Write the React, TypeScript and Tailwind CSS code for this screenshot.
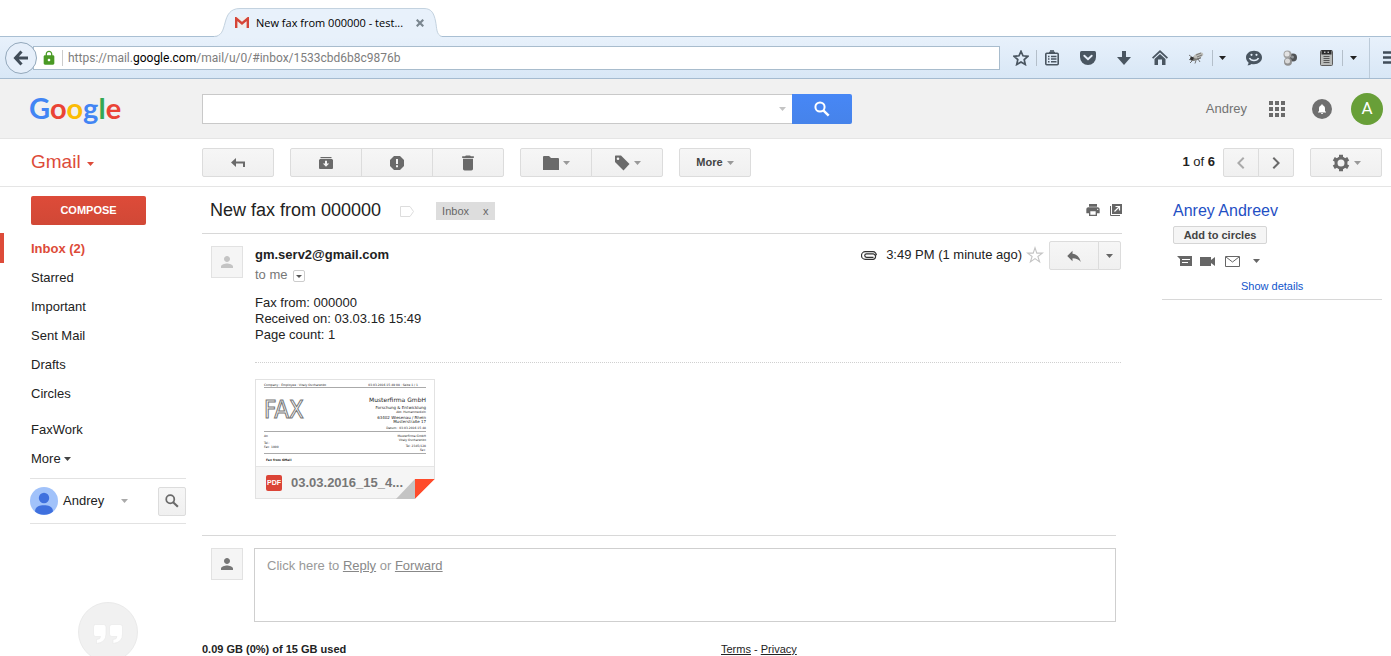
import { ReactNode } from "react";
import {
    MdDelete,
    MdKeyboardArrowLeft,
    MdKeyboardArrowRight,
    MdLock,
    MdNotifications,
    MdPerson,
    MdPrint,
    MdReply,
} from "react-icons/md";

const folders = ["Starred", "Important", "Sent Mail", "Drafts", "Circles"];

function Caret({ className = "text-[#999]" }: { className?: string }) {
    return (
        <svg viewBox="0 0 7 4" className={`w-[7px] h-1 shrink-0 ${className}`} fill="currentColor" aria-hidden="true">
            <path d="M0 0h7L3.500 4z" />
        </svg>
    )
}

function SearchIcon({ className }: { className: string }) {
    return (
        <svg viewBox="0 0 16 16" className={`shrink-0 ${className}`} fill="none" stroke="currentColor" aria-hidden="true">
            <circle cx="6" cy="6" r="4.600" strokeWidth="2" />
            <path d="M9.300 9.300l5.400 5.400" strokeWidth="2.400" />
        </svg>
    )
}

function GearIcon() {
    return (
        <svg viewBox="-9 -9 18 18" className="w-[18px] h-[18px] shrink-0" aria-hidden="true">
            <circle r="5" fill="none" stroke="currentColor" strokeWidth="3" />
            <path
                d="M0-8.300V-5M7.200-4.150L4.300-2.500M7.200 4.150L4.300 2.500M0 8.300V5M-7.200 4.150L-4.300 2.500M-7.200-4.150L-4.300-2.500"
                fill="none"
                stroke="currentColor"
                strokeWidth="4"
            />
        </svg>
    )
}

function ToolButton({ label, className = "", children }: { label: string, className?: string, children: ReactNode }) {
    return (
        <button
            aria-label={label}
            className={`h-[29px] flex items-center justify-center gap-1 border border-[#dcdcdc] bg-linear-to-b from-[#f6f6f6] to-[#f0f0f0] text-[#6a6a6a] ${className}`}
        >
            {children}
        </button>
    )
}

function BrowserTab() {
    return (
        <div className="h-[37px] bg-white border-b border-[#a9bfd3] flex items-end pl-[214px]">
            <div className="relative w-[228px] h-[29px] -mb-px flex items-center">
                <svg viewBox="0 0 228 29" className="absolute inset-0 w-full h-full" aria-hidden="true">
                    <path d="M0 29C8 28 9 22 11 15C13 7 16 .5 26 .5H210C218 .5 220 6 221.500 13C223 20 222 27 228 29z" fill="#e8f1fb" />
                    <path d="M0 28.500C8 28 9 22 11 15C13 7 16 .5 26 .5H210C218 .5 220 6 221.500 13C223 20 222 27 228 28.500" fill="none" stroke="#c3d2df" />
                </svg>
                <div className="relative flex items-center pl-[21px] w-full">
                    <svg viewBox="0 0 14 11" className="w-3.5 h-[11px]" aria-hidden="true">
                        <path d="M1 0h12v11H1z" fill="#eee" />
                        <path d="M1.200 11V1.500L7 6.500l5.800-5V11" fill="none" stroke="#d54538" strokeWidth="2.400" />
                    </svg>
                    <span className="ml-[7px] text-[11px] leading-4 text-black whitespace-nowrap">New fax from 000000 - test...</span>
                    <button aria-label="Close tab" className="ml-auto mr-[18px]">
                        <svg viewBox="0 0 8 8" className="w-2 h-2" stroke="#7b8790" strokeWidth="2.200" aria-hidden="true">
                            <path d="M.7.7l6.600 6.600M7.300.7L.7 7.300" />
                        </svg>
                    </button>
                </div>
            </div>
        </div>
    )
}

function ChromeButton({ label, className = "w-9", children }: { label: string, className?: string, children: ReactNode }) {
    return (
        <button aria-label={label} className={`h-6 shrink-0 flex items-center justify-center text-[#4a5661] ${className}`}>
            {children}
        </button>
    )
}

function Divider() {
    return <span className="w-1 h-4 shrink-0 flex justify-center"><span className="w-px h-4 bg-[#b4bfca]" /></span>
}

function AddressBar() {
    return (
        <div className="h-[42px] flex items-center bg-linear-to-b from-[#e8f1fb] to-[#d8e7f6] border-b border-[#a5bbd0] pl-[5px]">
            <button aria-label="Back" className="relative w-8 h-8 shrink-0 rounded-full border border-[#93a8bb] bg-[#e6effa] flex items-center justify-center">
                <svg viewBox="0 0 16 16" className="w-4 h-4" fill="none" stroke="#414d59" strokeWidth="3" aria-hidden="true">
                    <path d="M8.500 1.500L2.500 8l6 6.500M3 8h12" />
                </svg>
            </button>
            <div className="flex-1 h-6 -ml-1 flex items-center border border-[#a8bccd] bg-white">
                <MdLock className="ml-[7px] w-4 h-4 text-[#4a9a24]" />
                <span className="w-px h-4 ml-[5px] bg-[#ccc]" />
                <span className="ml-[5px] font-['Roboto','Open_Sans',sans-serif] text-[12px] leading-4 text-[#7d7d7d] whitespace-nowrap">
                    https://mail.<span className="text-black">google.com</span>/mail/u/0/#inbox/1533cbd6b8c9876b
                </span>
            </div>
            <ChromeButton label="Bookmark" className="w-7 ml-[7px] -mr-px">
                <svg viewBox="0 0 16 16" className="w-4 h-4" fill="none" stroke="currentColor" strokeWidth="1.700" aria-hidden="true">
                    <path d="M8 1.300l2 4.500 4.900.5-3.700 3.300 1.100 4.900L8 12l-4.300 2.500 1.100-4.900L1.100 6.300 6 5.800z" />
                </svg>
            </ChromeButton>
            <Divider />
            <ChromeButton label="Bookmarks list" className="w-7 mr-1">
                <svg viewBox="0 0 16 16" className="w-4 h-4" fill="none" stroke="currentColor" strokeWidth="1.600" aria-hidden="true">
                    <rect x="1.800" y="3.300" width="12.400" height="11.400" rx="1" />
                    <path d="M4 6.500h1.500M7 6.500h5.500M4 9h1.500M7 9h5.500M4 11.700h1.500M7 11.700h5.500M5 2.500h6" />
                    <path d="M6 1h4" />
                </svg>
            </ChromeButton>
            <ChromeButton label="Pocket">
                <svg viewBox="0 0 16 14" className="w-4 h-3.5" aria-hidden="true">
                    <path d="M1.500 0h13Q16 0 16 1.500V6a8 8 0 0 1-16 0V1.500Q0 0 1.500 0z" fill="currentColor" />
                    <path d="M4.300 4.700L8 8.200l3.700-3.500" fill="none" stroke="#e6eef8" strokeWidth="1.900" strokeLinecap="round" />
                </svg>
            </ChromeButton>
            <ChromeButton label="Downloads">
                <svg viewBox="0 0 14 14" className="w-3.5 h-3.5" fill="currentColor" aria-hidden="true">
                    <path d="M5 0h4v6h5l-7 8-7-8h5z" />
                </svg>
            </ChromeButton>
            <ChromeButton label="Home">
                <svg viewBox="0 0 16 15" className="w-4 h-[15px]" fill="currentColor" aria-hidden="true">
                    <path d="M8 0l8 7.500-1.200 1.200L8 2.500 1.200 8.700 0 7.500z" />
                    <path d="M8 4l5.500 5v6H10V9.500H6V15H2.500V9z" />
                </svg>
            </ChromeButton>
            <ChromeButton label="Fly" className="w-8 pl-1">
                <svg viewBox="0 0 16 14" className="w-4 h-3.5" aria-hidden="true">
                    <path d="M2 12l3-3-4-.5M7 12.500l1-3M12 11l-2-3M1 4l4 3" fill="none" stroke="#666" strokeWidth=".9" />
                    <ellipse cx="8" cy="7" rx="5.500" ry="2.400" fill="#7d7d79" transform="rotate(-20 8 7)" />
                    <ellipse cx="10.500" cy="4.500" rx="5" ry="2.400" fill="#bdbdb8" transform="rotate(-22 10.500 4.500)" />
                    <path d="M9 6l5-2M9 8l4-1M8 4l5-2" stroke="#666" strokeWidth=".8" />
                    <circle cx="3.800" cy="7.500" r="1.800" fill="#333" />
                </svg>
            </ChromeButton>
            <Divider />
            <ChromeButton label="Fly options" className="w-4"><Caret className="text-[#222]" /></ChromeButton>
            <ChromeButton label="Chat" className="w-9 ml-1.5">
                <svg viewBox="0 0 16 16" className="w-4 h-4" aria-hidden="true">
                    <path d="M8 .8c4.500 0 8 2.900 8 6.700s-3.500 6.700-8 6.700c-.9 0-1.700-.1-2.500-.3-1 1-2.500 1.500-4.200 1.400.9-.8 1.300-1.700 1.200-2.800C1 11.300 0 9.500 0 7.500 0 3.700 3.500.8 8 .8z" fill="currentColor" />
                    <path d="M3.500 8c1.500 3.300 7.500 3.300 9 0" fill="none" stroke="#e3edf8" strokeWidth="1.500" />
                    <circle cx="5.500" cy="4.800" r="1.100" fill="#e3edf8" />
                    <circle cx="10.500" cy="4.800" r="1.100" fill="#e3edf8" />
                </svg>
            </ChromeButton>
            <ChromeButton label="Molecule">
                <svg viewBox="0 0 14 16" className="w-3.5 h-4" aria-hidden="true">
                    <circle cx="10" cy="7.500" r="4" fill="#505356" />
                    <circle cx="9.500" cy="7" r="1.500" fill="#92969a" />
                    <circle cx="4.500" cy="4.500" r="4" fill="#a3a3a3" />
                    <circle cx="4" cy="4" r="2.500" fill="#e3e3e3" />
                    <circle cx="5" cy="11.700" r="4" fill="#8f8f8f" />
                    <circle cx="4.500" cy="11" r="2.500" fill="#d9d9d9" />
                </svg>
            </ChromeButton>
            <ChromeButton label="Device" className="w-8 pl-1">
                <svg viewBox="0 0 13 16" className="w-[13px] h-4" aria-hidden="true">
                    <rect x=".5" y=".5" width="12" height="15" rx="1" fill="#b8bab8" stroke="#5c5c5c" />
                    <rect x="1.500" y="0" width="10" height="4.500" fill="#2d2d2d" />
                    <path d="M4 2.200h1.500M7.500 2.200H9" stroke="#fff" />
                    <path d="M3.500 6.500h6M3.500 8.500h6M3.500 10.500h6M3.500 12.500h6" stroke="#565656" />
                </svg>
            </ChromeButton>
            <Divider />
            <ChromeButton label="Device options" className="w-[18px]"><Caret className="text-[#222]" /></ChromeButton>
            <span className="w-px h-10 ml-[7px] bg-[#bccbd9]" />
            <button aria-label="Menu" className="w-[21px] pl-[13px] shrink-0 overflow-hidden">
                <svg viewBox="0 0 16 13" className="w-4 h-[13px] max-w-none" stroke="#414d59" strokeWidth="2.600" aria-hidden="true">
                    <path d="M0 1.500h16M0 6.500h16M0 11.500h16" />
                </svg>
            </button>
        </div>
    )
}

function GoogleBar() {
    return (
        <header className="h-[60px] flex items-center bg-[#f1f1f1] border-b border-[#e5e5e5] pr-2">
            <a href="#" aria-label="Google" className="w-[202px] pl-[29px] pb-0.5 shrink-0 font-['Lato',sans-serif] text-[29px] leading-10 font-bold">
                <span className="text-[#4285f4]">G</span>
                <span className="text-[#ea4335]">o</span>
                <span className="text-[#fbbc05]">o</span>
                <span className="text-[#4285f4]">g</span>
                <span className="text-[#34a853]">l</span>
                <span className="text-[#ea4335]">e</span>
            </a>
            <form className="flex flex-1 max-w-[650px] h-[30px]">
                <div className="flex-1 flex items-center bg-white border border-r-0 border-[#c9c9c9] pr-1.5">
                    <input aria-label="Search mail" className="flex-1 h-full px-2 outline-none" />
                    <Caret className="text-[#c4c4c4]" />
                </div>
                <button type="button" aria-label="Search" className="w-[60px] rounded-r-xs bg-linear-to-b from-[#4787f6] to-[#4683ea] text-white flex items-center justify-center">
                    <SearchIcon className="w-4 h-4" />
                </button>
            </form>
            <div className="ml-auto flex items-center">
                <a href="#" className="text-[#737373]">Andrey</a>
                <button aria-label="Apps" className="ml-[22px]">
                    <svg viewBox="0 0 16 16" className="w-4 h-4" fill="#6a6a6a" aria-hidden="true">
                        <path d="M0 0h4v4H0zM6 0h4v4H6zM12 0h4v4h-4zM0 6h4v4H0zM6 6h4v4H6zM12 6h4v4h-4zM0 12h4v4H0zM6 12h4v4H6zM12 12h4v4h-4z" />
                    </svg>
                </button>
                <button aria-label="Notifications" className="ml-[27px] w-5 h-5 rounded-full bg-[#6f6f6f] flex items-center justify-center">
                    <MdNotifications className="w-3 h-3 text-white" />
                </button>
                <button aria-label="Account" className="ml-[19px] w-8 h-8 rounded-full bg-[#689f38] text-white font-['Roboto',sans-serif] text-[17px]">A</button>
            </div>
        </header>
    )
}

function Toolbar() {
    return (
        <div className="h-12 flex items-center border-b border-[#e5e5e5] pr-[9px]">
            <button className="w-[202px] pl-[31px] shrink-0 flex items-center text-[19px] text-[#dd4b39]">
                Gmail<Caret className="ml-1.5 mt-0.5" />
            </button>
            <div className="flex gap-4">
                <ToolButton label="Back to inbox" className="w-[72px] rounded-xs">
                    <svg viewBox="0 0 14 10" className="w-3.5 h-2.5" aria-hidden="true">
                        <path d="M5 0v9L0 4.500z" fill="currentColor" />
                        <path d="M4 4.500h9V9" fill="none" stroke="currentColor" strokeWidth="2" />
                    </svg>
                </ToolButton>
                <div className="flex">
                    <ToolButton label="Archive" className="w-[72px] rounded-l-xs">
                        <svg viewBox="0 0 14 12" className="w-3.5 h-3" aria-hidden="true">
                            <path d="M1.500 0h11v1.200h-11z" fill="currentColor" />
                            <path d="M1 2h12l1 1v8q0 1-1 1H1q-1 0-1-1V3z" fill="currentColor" />
                            <path d="M6 3.800h2v2.700h2.200L7 9.800 3.800 6.500H6z" fill="#f3f3f3" />
                        </svg>
                    </ToolButton>
                    <ToolButton label="Report spam" className="w-[72px] -ml-px">
                        <svg viewBox="0 0 14 14" className="w-3.5 h-3.5" aria-hidden="true">
                            <path d="M4 0h6l4 4v6l-4 4H4l-4-4V4z" fill="currentColor" />
                            <path d="M6 3h2v5H6zM6 9.300h2v2H6z" fill="#f3f3f3" />
                        </svg>
                    </ToolButton>
                    <ToolButton label="Delete" className="w-[72px] -ml-px rounded-r-xs"><MdDelete className="w-5 h-5" /></ToolButton>
                </div>
                <div className="flex">
                    <ToolButton label="Move to" className="w-[72px] rounded-l-xs">
                        <svg viewBox="0 0 16 14" className="w-4 h-3.5" fill="currentColor" aria-hidden="true">
                            <path d="M1 0h5l2 2h7q1 0 1 1v11H0V1q0-1 1-1z" />
                        </svg>
                        <Caret />
                    </ToolButton>
                    <ToolButton label="Labels" className="w-[72px] -ml-px rounded-r-xs">
                        <svg viewBox="0 0 16 16" className="w-4 h-4" aria-hidden="true">
                            <path d="M1.500.5H7l8.500 8.500-6 6.500L1 7V1z" fill="currentColor" />
                            <circle cx="4" cy="3.700" r="1.300" fill="#f3f3f3" />
                        </svg>
                        <Caret />
                    </ToolButton>
                </div>
                <ToolButton label="More" className="w-[72px] rounded-xs text-[11px] font-bold">
                    <span className="text-[#444]">More</span><Caret />
                </ToolButton>
            </div>
            <span className="ml-auto mr-2 -mt-0.5"><b>1</b> of <b>6</b></span>
            <div className="flex">
                <ToolButton label="Newer" className="w-9 rounded-l-xs"><MdKeyboardArrowLeft className="w-6 h-6 text-[#aaa] shrink-0" /></ToolButton>
                <ToolButton label="Older" className="w-9 -ml-px rounded-r-xs"><MdKeyboardArrowRight className="w-6 h-6 shrink-0" /></ToolButton>
            </div>
            <ToolButton label="Settings" className="w-[72px] ml-4 rounded-xs"><GearIcon /><Caret /></ToolButton>
        </div>
    )
}

function Sidebar() {
    return (
        <nav className="w-[202px] shrink-0 pt-[9px]">
            <button className="ml-[31px] w-[115px] h-[29px] rounded-xs bg-linear-to-b from-[#dd4b39] to-[#d14836] text-white text-[11px] font-bold">COMPOSE</button>
            <ul className="mt-2 leading-[29px]">
                <li className="border-l-4 border-[#dd4b39] pl-[27px] pt-px">
                    <a href="#" className="font-bold text-[#dd4b39]">Inbox (2)</a>
                </li>
                {
                    folders.map((name) => (
                        <li key={name} className="pl-[31px]"><a href="#">{name}</a></li>
                    ))
                }
                <li className="pl-[31px] mt-[7px]"><a href="#">FaxWork</a></li>
                <li className="pl-[31px]">
                    <button className="flex items-center gap-[3px]">More <Caret className="text-[#444]" /></button>
                </li>
            </ul>
            <div className="ml-[30px] mr-4 mt-[5px] h-[46px] flex items-center border-y border-[#e2e2e2]">
                <svg viewBox="0 0 28 28" className="w-7 h-7" aria-hidden="true">
                    <circle cx="14" cy="14" r="14" fill="#a1c2fa" />
                    <circle cx="14" cy="11" r="5.200" fill="#3f70de" />
                    <path d="M5 24.500C5 20 9 18.300 14 18.300s9 1.700 9 6.200a14 14 0 0 1-18 0z" fill="#3f70de" />
                </svg>
                <span className="ml-[5px]">Andrey</span>
                <button aria-label="Chat status" className="ml-[17px]"><Caret className="text-[#aaa]" /></button>
                <ToolButton label="Search people" className="w-7 ml-auto rounded-xs"><SearchIcon className="w-3.5 h-3.5" /></ToolButton>
            </div>
            <div className="ml-[78px] mt-[78px] w-[60px] h-[60px] rounded-full bg-[#f1f1f1] border border-[#eaeaea] flex items-center justify-center pt-1">
                <svg viewBox="0 0 30 20" className="w-[30px] h-5" fill="#fff" stroke="#e8e8e8" strokeWidth=".6" aria-hidden="true">
                    <path d="M2.500.5h8q2.500 0 2.500 2.500v7q0 8.500-9.500 9.500v-4q4 0 4-3h-5Q.5 12.500.5 10V3Q.5.500 2.500.5z" />
                    <path d="M19 .5h8q2.500 0 2.500 2.500v7q0 8.500-9.500 9.500v-4q4 0 4-3h-5q-2.500 0-2.500-2.500V3Q16.500.500 19 .5z" />
                </svg>
            </div>
        </nav>
    )
}

function FaxPreview() {
    return (
        <div className="h-[86px] bg-white pt-[3px] px-2 font-['DejaVu_Sans',sans-serif] text-[3px] leading-1 text-[#222]">
            <div className="flex justify-between border-b border-[#aaa] pr-2">
                <span>Company · Employee · Vitaly Ovcharenko</span>
                <span>03.03.2016 15:49:08 · Seite 1 / 1</span>
            </div>
            <div className="flex justify-between pt-2 h-[44px] border-b border-[#aaa]">
                <p className="font-['DejaVu_Sans_Condensed','DejaVu_Sans',sans-serif] text-[24px] leading-7 text-white [-webkit-text-stroke:1px_#777]">FAX</p>
                <div className="text-right">
                    <p className="text-[6px] leading-2">Musterfirma GmbH</p>
                    <p className="text-[4px] leading-1 pt-0.5">Forschung &amp; Entwicklung</p>
                    <p className="leading-1">Abt. Humanmedizin</p>
                    <p className="text-[4px] leading-1 pt-0.5">63402 Wiesenau / Rhein</p>
                    <p className="text-[4px] leading-1">Musterstraße 17</p>
                    <p className="pt-0.5">Datum : 03.03.2016 15:48</p>
                </div>
            </div>
            <div className="flex justify-between h-[22px] pt-0.5 border-b border-[#aaa]">
                <div>
                    <p className="pb-[3px]">An</p>
                    <p>Tel.:</p>
                    <p>Fax: 1000</p>
                </div>
                <div className="text-right">
                    <p>Musterfirma GmbH</p>
                    <p>Vitaly Ovcharenko</p>
                    <p className="pt-0.5">Tel: 2345/128</p>
                    <p>Fax:</p>
                </div>
            </div>
            <p className="pl-0.5 pt-1 font-bold">Fax from GMail</p>
        </div>
    )
}

function Attachment() {
    return (
        <a href="#" className="relative block w-[180px] h-[120px] border border-[#e2e2e2]">
            <FaxPreview />
            <div className="h-8 flex items-center bg-[#f5f5f5] border-t border-[#e5e5e5] pl-2.5">
                <span className="w-4 h-4 rounded-xs bg-[#db4437] text-white text-[7px] leading-4 font-bold text-center">PDF</span>
                <span className="ml-[9px] text-[13px] font-bold text-[#777]">03.03.2016_15_4...</span>
            </div>
            <svg viewBox="0 0 39 20" className="absolute -right-px -bottom-px w-[39px] h-5" aria-hidden="true">
                <path d="M19 0v20H0z" fill="#c4c4c4" />
                <path d="M19 0h20L19 20z" fill="#ff4b2b" />
                <path d="M39 0v20H19z" fill="#fff" />
            </svg>
        </a>
    )
}

function Avatar({ className }: { className: string }) {
    return (
        <div className="w-8 h-8 shrink-0 border border-[#e2e2e2] bg-[#f5f5f5] flex items-center justify-center">
            <MdPerson className={`w-[18px] h-[18px] ${className}`} />
        </div>
    )
}

function Message() {
    return (
        <main className="flex-1 min-w-0">
            <div className="h-[47px] flex items-center border-b border-[#d8d8d8] pl-2">
                <h1 className="text-[18px]">New fax from 000000</h1>
                <svg viewBox="0 0 14 11" className="ml-[19px] mt-0.5 w-3.5 h-[11px]" fill="none" stroke="#ddd" aria-hidden="true">
                    <path d="M.5.5h9.500l3.500 5-3.500 5H.5z" />
                </svg>
                <div className="ml-[22px] mt-0.5 h-[18px] px-1.5 flex items-center gap-3.5 bg-[#ddd] text-[#666] text-[11px]">
                    <span>Inbox</span>
                    <button aria-label="Remove label">x</button>
                </div>
                <button aria-label="Print all" className="ml-auto"><MdPrint className="w-4 h-4 text-[#666]" /></button>
                <button aria-label="Open in new window" className="ml-[9px]">
                    <svg viewBox="0 0 12 12" className="w-3 h-3" aria-hidden="true">
                        <path d="M2 0h10v10H2z" fill="#666" />
                        <path d="M.5 2v9.500H10" fill="none" stroke="#666" />
                        <path d="M4.500 7.500L9 3M5.500 2.500h4v4" fill="none" stroke="#fff" strokeWidth="1.200" />
                    </svg>
                </button>
            </div>

            <article className="flex pl-[9px] pr-px pt-[7px]">
                <div className="pt-[5px]"><Avatar className="text-[#c4c4c4]" /></div>
                <div className="flex-1 ml-3">
                    <div className="flex">
                        <div className="pt-1.5">
                            <p className="font-bold leading-4">gm.serv2@gmail.com</p>
                            <p className="flex items-center mt-1 leading-4 text-[#777]">
                                to me
                                <button aria-label="Show details" className="ml-[5px] mt-0.5 w-3 h-3 border border-[#ccc] rounded-xs flex items-center justify-center">
                                    <svg viewBox="0 0 6 3" className="w-1.5 h-[3px]" aria-hidden="true"><path d="M0 0h6L3 3z" fill="#555" /></svg>
                                </button>
                            </p>
                        </div>
                        <div className="ml-auto h-[29px] flex items-center">
                            <svg viewBox="0 0 16 9" className="w-4 h-[9px]" fill="none" stroke="#333" strokeWidth="1.200" aria-label="Has attachment">
                                <path d="M12.500 6.300H5.500a1.700 1.700 0 0 1 0-3.500h6.800a2.800 2.800 0 0 1 0 5.500H4.300a3.800 3.800 0 0 1 0-7.600H12a3.500 3.500 0 0 1 3.400 3.600" />
                            </svg>
                            <span className="ml-[9px] pb-0.5">3:49 PM (1 minute ago)</span>
                            <button aria-label="Star" className="ml-1 pb-0.5">
                                <svg viewBox="0 0 18 18" className="w-[18px] h-[18px]" fill="none" stroke="#c4c4c4" strokeWidth="1.100" aria-hidden="true">
                                    <path d="M9 1.800l1.800 5.300h5.600l-4.500 3.400 1.700 5.400L9 12.600l-4.600 3.300 1.700-5.400L1.600 7.100h5.600z" />
                                </svg>
                            </button>
                            <ToolButton label="Reply" className="w-[50px] ml-[5px] rounded-l-xs"><MdReply className="w-[18px] h-[18px]" /></ToolButton>
                            <ToolButton label="More options" className="w-[23px] -ml-px rounded-r-xs"><Caret className="text-[#666]" /></ToolButton>
                        </div>
                    </div>
                    <div className="mt-3 leading-4">
                        <p>Fax from: 000000</p>
                        <p>Received on: 03.03.16 15:49</p>
                        <p>Page count: 1</p>
                    </div>
                    <div className="mt-[19px] mb-4 border-t border-dotted border-[#d0d0d0]" />
                    <Attachment />
                </div>
            </article>

            <section className="mt-9 mr-1.5 border-t border-[#d8d8d8] pl-[9px] pt-3 flex">
                <Avatar className="text-[#777]" />
                <div className="flex-1 ml-[11px] h-[74px] border border-[#cfcfcf] px-3 py-2 leading-[18px] text-[#999]">
                    Click here to <a href="#" className="underline text-[#888]">Reply</a> or <a href="#" className="underline text-[#888]">Forward</a>
                </div>
            </section>

            <footer className="mt-5 flex text-[11px] leading-[14px]">
                <span className="w-[519px] font-bold">0.09 GB (0%) of 15 GB used</span>
                <span><a href="#" className="underline">Terms</a> - <a href="#" className="underline">Privacy</a></span>
            </footer>
        </main>
    )
}

function ContactCard() {
    return (
        <aside className="w-[220px] shrink-0 h-[113px] border-b border-[#d8d8d8] pl-[11px] pt-3.5">
            <a href="#" className="block text-[16px] leading-5 text-[#1f4fc4]">Anrey Andreev</a>
            <button className="mt-[5px] h-[18px] w-[94px] block border border-[#d5d5d5] rounded-xs bg-[#f5f5f5] text-[11px] leading-4 font-bold text-[#444]">Add to circles</button>
            <div className="mt-[9px] ml-1 h-4 flex items-center text-[#666]">
                <button aria-label="Chat">
                    <svg viewBox="0 0 15 10" className="w-[15px] h-2.5" aria-hidden="true">
                        <path d="M0 0h15v10H3V3z" fill="currentColor" />
                        <path d="M5 3.500h8M5 6.500h6" stroke="#fff" />
                    </svg>
                </button>
                <button aria-label="Video call" className="ml-2">
                    <svg viewBox="0 0 15 9" className="w-[15px] h-[9px]" fill="currentColor" aria-hidden="true">
                        <path d="M0 0h11v3l4-3v9l-4-3v3H0z" />
                    </svg>
                </button>
                <button aria-label="Email" className="ml-2.5">
                    <svg viewBox="0 0 15 11" className="w-[15px] h-[11px]" fill="none" stroke="currentColor" aria-hidden="true">
                        <path d="M.5.5h14v10H.5zM1 1l6.500 5L14 1" />
                    </svg>
                </button>
                <button aria-label="More actions" className="ml-[13px]"><Caret className="text-[#666]" /></button>
            </div>
            <a href="#" className="block ml-[68px] mt-2.5 text-[11px] leading-[14px] text-[#15c]">Show details</a>
        </aside>
    )
}

function App() {
    return (
        <div className="h-screen overflow-hidden bg-white text-[#222] text-[13px] font-['Liberation_Sans',Arial,sans-serif]">
            <div className="font-['Open_Sans','Noto_Sans',sans-serif]">
                <BrowserTab />
                <AddressBar />
            </div>
            <GoogleBar />
            <Toolbar />
            <div className="flex pr-[9px]">
                <Sidebar />
                <Message />
                <div className="w-10 shrink-0" />
                <ContactCard />
            </div>
        </div>
    )
}

export default App;
